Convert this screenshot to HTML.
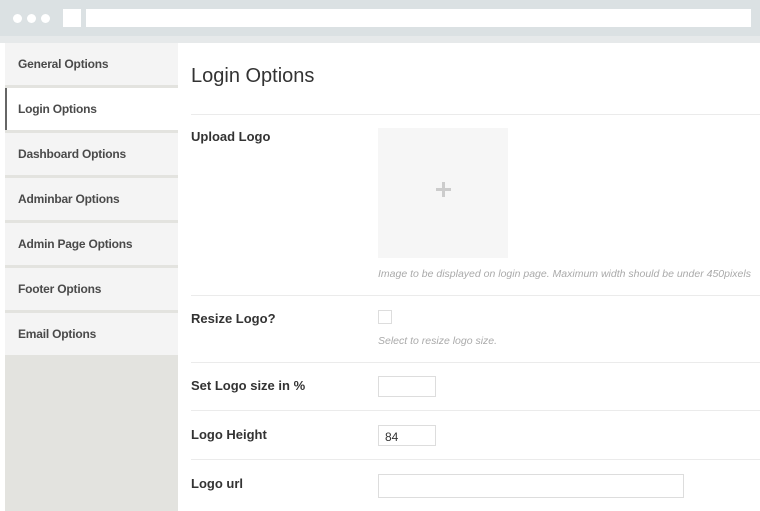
<!DOCTYPE html>
<html><head><style>
*{margin:0;padding:0;box-sizing:border-box}
body{width:760px;height:511px;overflow:hidden;background:#fff;font-family:"Liberation Sans",sans-serif;position:relative}
.a{position:absolute}
.top{left:0;top:0;width:760px;height:36px;background:#dbe1e3}
.frame{left:0;top:36px;width:760px;height:7px;background:#e6e9ea}
.dot{width:9px;height:9px;border-radius:50%;background:#fff;top:14px}
.side{left:5px;top:43px;width:173px;height:468px;background:#e3e3df}
.it{left:5px;width:173px;height:42px;background:#f4f4f4;font-size:12px;font-weight:bold;color:#4a4a4a;padding:14px 0 0 13px;letter-spacing:-0.2px}
.lbl{left:191px;font-size:13px;font-weight:bold;color:#333}
.sep{left:191px;width:569px;height:1px;background:#ebebeb}
.help{left:378px;font-size:10.5px;font-style:italic;color:#aaa;white-space:nowrap}
.inp{border:1px solid #ddd;background:#fff;left:378px}
</style></head><body>
<div class="a top"></div>
<div class="a dot" style="left:13px"></div><div class="a dot" style="left:27px"></div><div class="a dot" style="left:41px"></div>
<div class="a" style="left:63px;top:9px;width:18px;height:18px;background:#fff"></div>
<div class="a" style="left:86px;top:9px;width:665px;height:18px;background:#fff"></div>
<div class="a frame"></div>
<div class="a side"></div>
<div class="a it" style="top:43px">General Options</div>
<div class="a it" style="top:88px;background:#fff;border-left:2px solid #666;padding-left:11px">Login Options</div>
<div class="a it" style="top:133px">Dashboard Options</div>
<div class="a it" style="top:178px">Adminbar Options</div>
<div class="a it" style="top:223px">Admin Page Options</div>
<div class="a it" style="top:268px">Footer Options</div>
<div class="a it" style="top:313px">Email Options</div>
<div class="a" style="left:191px;top:65px;font-size:20px;color:#333">Login Options</div>
<div class="a sep" style="top:114px"></div>
<div class="a lbl" style="top:129px">Upload Logo</div>
<div class="a" style="left:378px;top:128px;width:130px;height:130px;background:#f6f6f6"></div>
<div class="a" style="left:436px;top:188px;width:15px;height:3px;background:#ccc"></div>
<div class="a" style="left:442px;top:182px;width:3px;height:15px;background:#ccc"></div>
<div class="a help" style="top:268px">Image to be displayed on login page. Maximum width should be under 450pixels</div>
<div class="a sep" style="top:295px"></div>
<div class="a lbl" style="top:311px">Resize Logo?</div>
<div class="a inp" style="top:310px;width:14px;height:14px"></div>
<div class="a help" style="top:335px">Select to resize logo size.</div>
<div class="a sep" style="top:362px"></div>
<div class="a lbl" style="top:378px">Set Logo size in %</div>
<div class="a inp" style="top:376px;width:58px;height:21px"></div>
<div class="a sep" style="top:410px"></div>
<div class="a lbl" style="top:427px">Logo Height</div>
<div class="a inp" style="top:425px;width:58px;height:21px;font-size:12px;color:#333;padding:4px 0 0 6px">84</div>
<div class="a sep" style="top:459px"></div>
<div class="a lbl" style="top:476px">Logo url</div>
<div class="a inp" style="top:474px;width:306px;height:24px"></div>
</body></html>
